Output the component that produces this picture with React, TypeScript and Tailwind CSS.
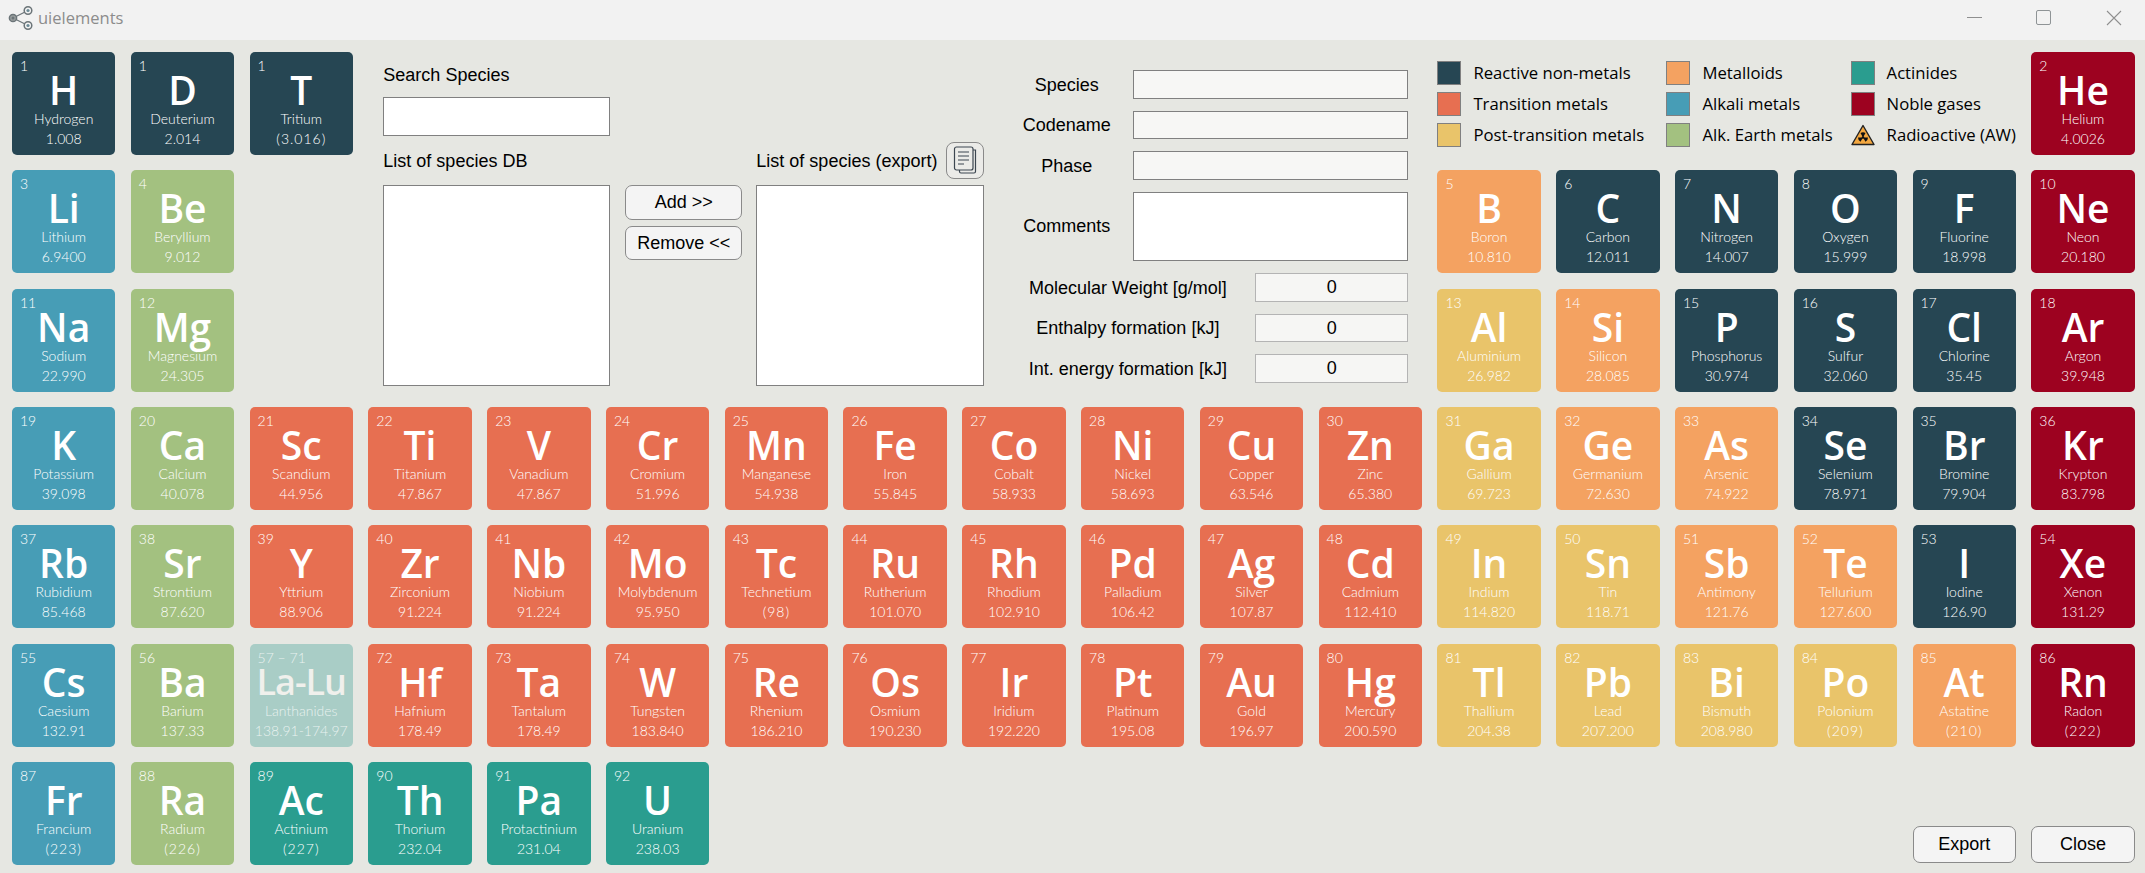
import React from 'react';

type Cat = 'nonmetal' | 'transition' | 'post' | 'metalloid' | 'alkali' | 'earth' | 'actinide' | 'noble' | 'lanthanide';

const tileColors: Record<Cat, string> = {
  nonmetal: 'bg-[#264653]',
  transition: 'bg-[#e76f51]',
  post: 'bg-[#e9c46a]',
  metalloid: 'bg-[#f4a261]',
  alkali: 'bg-[#479db6]',
  earth: 'bg-[#a3c180]',
  actinide: 'bg-[#2a9d8f]',
  noble: 'bg-[#9d0220]',
  lanthanide: 'bg-[#a9cdc6]',
};

// symbol, number, name, weight, category, column, row
type El = [string, string, string, string, Cat, number, number];

const row4: [string, string, string, Cat][] = [
  ['K', 'Potassium', '39.098', 'alkali'], ['Ca', 'Calcium', '40.078', 'earth'], ['Sc', 'Scandium', '44.956', 'transition'],
  ['Ti', 'Titanium', '47.867', 'transition'], ['V', 'Vanadium', '47.867', 'transition'], ['Cr', 'Cromium', '51.996', 'transition'],
  ['Mn', 'Manganese', '54.938', 'transition'], ['Fe', 'Iron', '55.845', 'transition'], ['Co', 'Cobalt', '58.933', 'transition'],
  ['Ni', 'Nickel', '58.693', 'transition'], ['Cu', 'Copper', '63.546', 'transition'], ['Zn', 'Zinc', '65.380', 'transition'],
  ['Ga', 'Gallium', '69.723', 'post'], ['Ge', 'Germanium', '72.630', 'metalloid'], ['As', 'Arsenic', '74.922', 'metalloid'],
  ['Se', 'Selenium', '78.971', 'nonmetal'], ['Br', 'Bromine', '79.904', 'nonmetal'], ['Kr', 'Krypton', '83.798', 'noble'],
];
const row5: [string, string, string, Cat][] = [
  ['Rb', 'Rubidium', '85.468', 'alkali'], ['Sr', 'Strontium', '87.620', 'earth'], ['Y', 'Yttrium', '88.906', 'transition'],
  ['Zr', 'Zirconium', '91.224', 'transition'], ['Nb', 'Niobium', '91.224', 'transition'], ['Mo', 'Molybdenum', '95.950', 'transition'],
  ['Tc', 'Technetium', '(98)', 'transition'], ['Ru', 'Rutherium', '101.070', 'transition'], ['Rh', 'Rhodium', '102.910', 'transition'],
  ['Pd', 'Palladium', '106.42', 'transition'], ['Ag', 'Silver', '107.87', 'transition'], ['Cd', 'Cadmium', '112.410', 'transition'],
  ['In', 'Indium', '114.820', 'post'], ['Sn', 'Tin', '118.71', 'post'], ['Sb', 'Antimony', '121.76', 'metalloid'],
  ['Te', 'Tellurium', '127.600', 'metalloid'], ['I', 'Iodine', '126.90', 'nonmetal'], ['Xe', 'Xenon', '131.29', 'noble'],
];
const row6: [string, string, string, string, Cat][] = [
  ['Cs', '55', 'Caesium', '132.91', 'alkali'], ['Ba', '56', 'Barium', '137.33', 'earth'], ['La-Lu', '57 – 71', 'Lanthanides', '138.91-174.97', 'lanthanide'],
  ['Hf', '72', 'Hafnium', '178.49', 'transition'], ['Ta', '73', 'Tantalum', '178.49', 'transition'], ['W', '74', 'Tungsten', '183.840', 'transition'],
  ['Re', '75', 'Rhenium', '186.210', 'transition'], ['Os', '76', 'Osmium', '190.230', 'transition'], ['Ir', '77', 'Iridium', '192.220', 'transition'],
  ['Pt', '78', 'Platinum', '195.08', 'transition'], ['Au', '79', 'Gold', '196.97', 'transition'], ['Hg', '80', 'Mercury', '200.590', 'transition'],
  ['Tl', '81', 'Thallium', '204.38', 'post'], ['Pb', '82', 'Lead', '207.200', 'post'], ['Bi', '83', 'Bismuth', '208.980', 'post'],
  ['Po', '84', 'Polonium', '(209)', 'post'], ['At', '85', 'Astatine', '(210)', 'metalloid'], ['Rn', '86', 'Radon', '(222)', 'noble'],
];

const elements: El[] = [
  ['H', '1', 'Hydrogen', '1.008', 'nonmetal', 1, 1],
  ['D', '1', 'Deuterium', '2.014', 'nonmetal', 2, 1],
  ['T', '1', 'Tritium', '(3.016)', 'nonmetal', 3, 1],
  ['He', '2', 'Helium', '4.0026', 'noble', 18, 1],
  ['Li', '3', 'Lithium', '6.9400', 'alkali', 1, 2],
  ['Be', '4', 'Beryllium', '9.012', 'earth', 2, 2],
  ['B', '5', 'Boron', '10.810', 'metalloid', 13, 2],
  ['C', '6', 'Carbon', '12.011', 'nonmetal', 14, 2],
  ['N', '7', 'Nitrogen', '14.007', 'nonmetal', 15, 2],
  ['O', '8', 'Oxygen', '15.999', 'nonmetal', 16, 2],
  ['F', '9', 'Fluorine', '18.998', 'nonmetal', 17, 2],
  ['Ne', '10', 'Neon', '20.180', 'noble', 18, 2],
  ['Na', '11', 'Sodium', '22.990', 'alkali', 1, 3],
  ['Mg', '12', 'Magnesium', '24.305', 'earth', 2, 3],
  ['Al', '13', 'Aluminium', '26.982', 'post', 13, 3],
  ['Si', '14', 'Silicon', '28.085', 'metalloid', 14, 3],
  ['P', '15', 'Phosphorus', '30.974', 'nonmetal', 15, 3],
  ['S', '16', 'Sulfur', '32.060', 'nonmetal', 16, 3],
  ['Cl', '17', 'Chlorine', '35.45', 'nonmetal', 17, 3],
  ['Ar', '18', 'Argon', '39.948', 'noble', 18, 3],
  ...row4.map((e, i): El => [e[0], String(19 + i), e[1], e[2], e[3], i + 1, 4]),
  ...row5.map((e, i): El => [e[0], String(37 + i), e[1], e[2], e[3], i + 1, 5]),
  ...row6.map((e, i): El => [e[0], e[1], e[2], e[3], e[4], i + 1, 6]),
  ['Fr', '87', 'Francium', '(223)', 'alkali', 1, 7],
  ['Ra', '88', 'Radium', '(226)', 'earth', 2, 7],
  ['Ac', '89', 'Actinium', '(227)', 'actinide', 3, 7],
  ['Th', '90', 'Thorium', '232.04', 'actinide', 4, 7],
  ['Pa', '91', 'Protactinium', '231.04', 'actinide', 5, 7],
  ['U', '92', 'Uranium', '238.03', 'actinide', 6, 7],
];

const Tile: React.FC<{ el: El }> = ({ el }) => {
  const [symbol, num, name, weight, cat, col, row] = el;
  const faded = cat === 'lanthanide';
  const small = faded ? 'text-white/75' : 'text-white';
  return (
    <div
      className={`flex flex-col items-center rounded-[5px] text-white overflow-hidden whitespace-nowrap ${tileColors[cat]}`}
      style={{ gridColumn: col, gridRow: row }}
    >
      <div className={`self-start ml-2 mt-[5px] h-[18px] text-[14px] leading-[18px] font-['Lato'] font-light ${small}`}>{num}</div>
      <div className={`-mt-[5px] h-[40px] leading-[40px] font-['Open_Sans'] font-semibold ${faded ? 'text-[#f0f0ec] text-[36px] tracking-[-1px]' : 'text-[39px]'}`}>{symbol}</div>
      <div className={`h-[18px] text-[14px] leading-[18px] font-['Lato'] font-light ${small}`}>{name}</div>
      <div className={`mt-[2px] h-[18px] text-[14px] leading-[18px] font-['Lato'] font-light ${small} ${weight.startsWith('(') ? 'tracking-[1px]' : ''}`}>{weight}</div>
    </div>
  );
};

const Swatch: React.FC<{ color: string; label: string }> = ({ color, label }) => (
  <div className="flex items-center h-[24px]">
    <div className={`w-[24px] h-[24px] border border-[#808080] ${color}`} />
    <span className="ml-[12px] text-[16.7px] font-['Open_Sans'] text-black whitespace-nowrap">{label}</span>
  </div>
);

const ReadonlyRow: React.FC<{ label: string; h: string }> = ({ label, h }) => (
  <div className={`flex items-center ${h}`}>
    <div className="w-[133px] pt-px text-center">{label}</div>
    <div className={`w-[275px] ${h} bg-[#f7f7f5] border border-[#808080]`} />
  </div>
);

const NumberRow: React.FC<{ label: string; h: string }> = ({ label, h }) => (
  <div className={`flex items-center ${h}`}>
    <div className="w-[255px] pt-px text-center">{label}</div>
    <div className={`w-[153px] ${h} flex items-center justify-center bg-[#f6f6f4] border border-[#b4b4b4]`}>0</div>
  </div>
);

const btn = 'rounded-[7px] border border-[#8a8a8a] bg-[#f4f4f4] text-[18px] text-black';

export default function App() {
  return (
    <div className="w-[2145px] h-[873px] bg-[#e6e7e2] font-['Liberation_Sans',sans-serif] text-black overflow-hidden">
      {/* title bar */}
      <div className="h-[40px] pb-[5px] bg-[#f2f2f2] flex items-center justify-between">
        <div className="flex items-center">
          <svg width="26" height="26" viewBox="0 0 26 26" className="ml-[8px]" fill="none" stroke="#6b7478">
            <path d="M5 13L20 5.500M5 13L20 20.500" strokeWidth="1.2" />
            <circle cx="5" cy="13" r="3.600" strokeWidth="1.500" fill="#9a9f9f" />
            <circle cx="5" cy="13" r="1.500" fill="#6b7478" stroke="none" />
            <circle cx="20" cy="5.500" r="3.800" strokeWidth="1.500" fill="#f2f2f2" />
            <circle cx="20" cy="5.500" r="1.600" fill="#6b8a96" stroke="none" />
            <circle cx="20" cy="20.500" r="3.800" strokeWidth="1.500" fill="#f2f2f2" />
            <circle cx="20" cy="20.500" r="1.600" fill="#6b8a96" stroke="none" />
          </svg>
          <span className="ml-[4px] mt-[1px] text-[16.500px] text-[#8c8c8c] font-['Open_Sans']">uielements</span>
        </div>
        <div className="flex items-center">
          <div className="w-[15px] h-px bg-[#8f8f8f]" />
          <div className="ml-[54px] w-[15px] h-[15px] border-[1.5px] border-[#8f9496] rounded-[2px]" />
          <svg width="16" height="16" viewBox="0 0 16 16" className="ml-[55px] mr-[23px]" stroke="#8f8f8f" strokeWidth="1.1">
            <path d="M1 1L15 15M15 1L1 15" />
          </svg>
        </div>
      </div>

      {/* table */}
      <div className="grid grid-cols-[repeat(18,103.4px)] grid-rows-[repeat(7,103px)] gap-x-[15.4px] gap-y-[15.33px] pl-[12px] pt-[12px]">
        {elements.map((el) => (
          <Tile key={el[0] + el[2]} el={el} />
        ))}

        {/* search + form panel */}
        <div className="col-start-4 col-span-9 row-start-1 row-span-3 flex pl-[15px] text-[18px]">
          <div className="w-[227px] flex flex-col">
            <div className="mt-[13px] h-[20px] leading-[20px]">Search Species</div>
            <div className="mt-[12px] h-[39px] bg-white border border-[#808080]" />
            <div className="mt-[15px] h-[20px] leading-[20px]">List of species DB</div>
            <div className="mt-[14px] h-[201px] bg-white border border-[#808080]" />
          </div>
          <div className="ml-[15px] w-[117px] flex flex-col gap-[6px] pt-[133px]">
            <button className={`h-[35px] ${btn}`}>Add &gt;&gt;</button>
            <button className={`h-[34px] ${btn}`}>Remove &lt;&lt;</button>
          </div>
          <div className="ml-[14px] w-[228px] flex flex-col">
            <div className="mt-[90px] h-[37px] flex items-center justify-between">
              <span className="pt-px whitespace-nowrap">List of species (export)</span>
              <button className="w-[38px] h-[37px] flex items-center justify-center rounded-[8px] border border-[#8a8a8a] bg-[#ebebe8]">
                <svg width="24" height="29" viewBox="0 0 24 29" fill="none" stroke="#3c4650" strokeWidth="1.200">
                  <path d="M20 4h2.500v21.500a1.500 1.500 0 0 1-1.500 1.500H8a1.500 1.500 0 0 1-1.500-1.500V24" />
                  <rect x="1.500" y="1" width="18.500" height="23" rx="2" />
                  <path d="M5 6h11M5 10h11M5 14h11M5 18h6" />
                </svg>
              </button>
            </div>
            <div className="mt-[6px] h-[201px] bg-white border border-[#808080]" />
          </div>
          <div className="ml-[16px] w-[408px] flex flex-col gap-[12px] pt-[18px]">
            <ReadonlyRow label="Species" h="h-[29px]" />
            <ReadonlyRow label="Codename" h="h-[28px]" />
            <ReadonlyRow label="Phase" h="h-[29px]" />
            <div className="flex items-center h-[69px]">
              <div className="w-[133px] text-center">Comments</div>
              <div className="w-[275px] h-[69px] bg-white border border-[#808080]" />
            </div>
            <NumberRow label="Molecular Weight [g/mol]" h="h-[29px]" />
            <NumberRow label="Enthalpy formation [kJ]" h="h-[28px]" />
            <NumberRow label="Int. energy formation [kJ]" h="h-[29px]" />
          </div>
        </div>

        {/* legend */}
        <div className="col-start-13 col-span-5 row-start-1 flex pt-[9px]">
          <div className="w-[230px] flex flex-col gap-[7px]">
            <Swatch color="bg-[#264653]" label="Reactive non-metals" />
            <Swatch color="bg-[#e76f51]" label="Transition metals" />
            <Swatch color="bg-[#e9c46a]" label="Post-transition metals" />
          </div>
          <div className="w-[185px] flex flex-col gap-[7px]">
            <Swatch color="bg-[#f4a261]" label="Metalloids" />
            <Swatch color="bg-[#479db6]" label="Alkali metals" />
            <Swatch color="bg-[#a3c180]" label="Alk. Earth metals" />
          </div>
          <div className="flex flex-col gap-[7px]">
            <Swatch color="bg-[#2a9d8f]" label="Actinides" />
            <Swatch color="bg-[#9d0220]" label="Noble gases" />
            <div className="flex items-center h-[24px]">
              <svg width="24" height="22" viewBox="0 0 24 22">
                <path d="M12 1.500L23 20.500H1Z" fill="#f4a840" stroke="#222" strokeWidth="1.400" strokeLinejoin="round" />
                <circle cx="12" cy="13.500" r="1.300" fill="#111" />
                <path d="M12 13.500L9.500 9a5 5 0 0 1 5 0ZM12 13.500H17a5 5 0 0 1-2.500 4.300ZM12 13.500H7a5 5 0 0 0 2.500 4.300Z" fill="#111" />
              </svg>
              <span className="ml-[12px] text-[16.7px] font-['Open_Sans'] whitespace-nowrap">Radioactive (AW)</span>
            </div>
          </div>
        </div>

        {/* bottom buttons */}
        <button className={`col-start-17 row-start-7 self-end mb-[2px] h-[37px] ${btn}`}>Export</button>
        <button className={`col-start-18 row-start-7 self-end mb-[2px] h-[37px] ${btn}`}>Close</button>
      </div>
    </div>
  );
}
